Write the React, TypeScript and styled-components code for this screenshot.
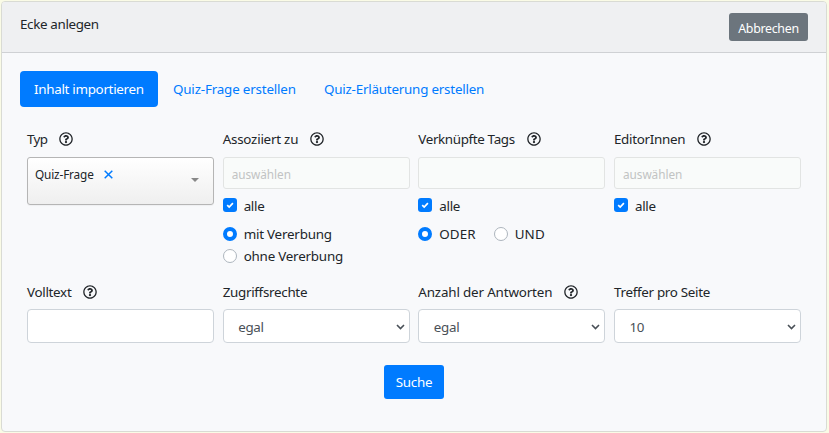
import React from "react";
import styled, { createGlobalStyle } from "styled-components";
import { FaRegQuestionCircle } from "react-icons/fa";

const Global = createGlobalStyle`
  * { box-sizing: border-box; }
  html, body { margin: 0; height: 433px; overflow: hidden; background: #fafbe6; }
  body { font-family: "Noto Sans", "Open Sans", sans-serif; font-size: 13.4px; line-height: 20px; color: #212529; }
`;

const Card = styled.div`
  width: 826px;
  height: 431px;
  margin: 1px 0 0 1px;
  background: #f8f9fb;
  border: 1px solid #d9dbd4;
  border-radius: 4px;
  overflow: hidden;
`;
const Header = styled.header`
  display: flex;
  justify-content: space-between;
  height: 51px;
  padding: 11px 18px 0;
  background: #eff0f2;
  border-bottom: 1px solid #cfd1d4;
`;
const Text = styled.span<{ $spacing?: number }>`
  white-space: nowrap;
  letter-spacing: ${(p) => p.$spacing ?? -0.3}px;
`;
const Title = styled(Text)`
  margin-top: 1px;
`;
const Cancel = styled.button`
  width: 79px;
  height: 28px;
  border: 0;
  border-radius: 3px;
  padding: 3px 0 0;
  background: #6c757d;
  color: #fff;
  font: 12.4px/20px "Noto Sans", sans-serif;
`;
const Tabs = styled.nav`
  display: flex;
  height: 36px;
  gap: 1px;
  margin: 18px 18px 0;
`;
const Tab = styled.button<{ $active?: boolean; $width: number }>`
  width: ${(p) => p.$width}px;
  border: 0;
  border-radius: 4px;
  padding: 0 0 1px 14px;
  text-align: left;
  background: ${(p) => (p.$active ? "#007bff" : "transparent")};
  color: ${(p) => (p.$active ? "#fff" : "#007bff")};
  font: inherit;
`;
const Fields = styled.div<{ $top: number; $height: number }>`
  display: grid;
  grid-template-columns: repeat(4, 187px);
  justify-content: space-between;
  width: 774px;
  height: ${(p) => p.$height}px;
  margin: ${(p) => p.$top}px 0 0 25px;
`;
const Label = styled.div<{ $gap?: number }>`
  display: flex;
  align-items: center;
  gap: 12px;
  height: 20px;
  margin-bottom: ${(p) => p.$gap ?? 8}px;
  svg { flex: none; width: 14px; height: 14px; }
`;
const Picker = styled.div`
  display: flex;
  align-items: center;
  height: 32px;
  padding: 2px 8px 0;
  border: 1px solid #e2e4e3;
  border-radius: 3px;
  background: #f9fbfa;
  color: #c1c3c3;
  font-size: 11.8px;
`;
const TypePicker = styled.div`
  display: flex;
  height: 48px;
  padding: 6px 14px 0 7px;
  border: 1px solid #b5b5b5;
  border-radius: 3px;
  background: linear-gradient(#ffffff, #efefef);
  box-shadow: 0 1px 1px rgba(0, 0, 0, 0.04);
  font-size: 11.8px;
  line-height: 20px;
`;
const Remove = styled.svg`
  width: 9px;
  height: 9px;
  margin: 6px auto 0 10px;
`;
const Arrow = styled.svg`
  width: 8px;
  height: 4px;
  margin-top: 14px;
`;
const Option = styled.div<{ $top?: number }>`
  display: flex;
  align-items: center;
  gap: 7px;
  height: 20px;
  margin-top: ${(p) => p.$top ?? 0}px;
`;
const Check = styled.span`
  display: flex;
  width: 14px;
  height: 14px;
  margin-top: -2px;
  border-radius: 3px;
  background: #007bff;
`;
const Radio = styled.span<{ $on?: boolean }>`
  width: 14px;
  height: 14px;
  border-radius: 50%;
  background: #fff;
  border: ${(p) => (p.$on ? "4.5px solid #007bff" : "1px solid #adb5bd")};
`;
const Choices = styled.div`
  display: flex;
  gap: 18px;
`;
const Input = styled.div`
  display: flex;
  align-items: center;
  justify-content: space-between;
  height: 34px;
  padding: 2px 4px 0 14.5px;
  border: 1px solid #ced4da;
  border-radius: 4px;
  background: #fff;
  color: #495057;
  svg { width: 9px; height: 6px; margin-top: -1px; }
`;
const Submit = styled.button`
  display: block;
  width: 60px;
  height: 34px;
  margin: 22px 0 0 382px;
  padding: 0 0 1px;
  border: 0;
  border-radius: 3px;
  background: #007bff;
  color: #fff;
  font: inherit;
`;

function FieldLabel({ text, help, spacing, gap }: { text: string; help?: boolean; spacing?: number; gap?: number }) {
  return (
    <Label $gap={gap}>
      <Text $spacing={spacing}>{text}</Text>
      {help && <FaRegQuestionCircle />}
    </Label>
  );
}

function All() {
  return (
    <Option $top={7}>
      <Check>
        <svg width="14" height="14" viewBox="0 0 14 14">
          <path d="M4.2 7.2 6.2 9.1 9.9 5.2" fill="none" stroke="#fff" strokeWidth="1.7" />
        </svg>
      </Check>
      <Text>alle</Text>
    </Option>
  );
}

function Select({ value }: { value: string }) {
  return (
    <Input>
      <Text>{value}</Text>
      <svg viewBox="0 0 9 6">
        <path d="M1 1l3.5 3.5L8 1" fill="none" stroke="#495057" strokeWidth="1.6" />
      </svg>
    </Input>
  );
}

export default function App() {
  return (
    <>
      <Global />
      <Card>
        <Header>
          <Title $spacing={-0.35}>Ecke anlegen</Title>
          <Cancel><Text>Abbrechen</Text></Cancel>
        </Header>
        <Tabs>
          <Tab $active $width={138}><Text>Inhalt importieren</Text></Tab>
          <Tab $width={150}><Text $spacing={-0.18}>Quiz-Frage erstellen</Text></Tab>
          <Tab $width={190}><Text $spacing={-0.22}>Quiz-Erläuterung erstellen</Text></Tab>
        </Tabs>
        <Fields $top={22} $height={153}>
          <div>
            <FieldLabel text="Typ" help spacing={-0.6} />
            <TypePicker>
              <Text $spacing={-0.15}>Quiz-Frage</Text>
              <Remove viewBox="0 0 9 9"><path d="M.7.7l7.6 7.6M8.3.7L.7 8.3" stroke="#007bff" strokeWidth="1.5" /></Remove>
              <Arrow viewBox="0 0 8 4"><path d="M0 0h8L4 4z" fill="#888" /></Arrow>
            </TypePicker>
          </div>
          <div>
            <FieldLabel text="Assoziiert zu" help spacing={-0.23} />
            <Picker><Text $spacing={-0.05}>auswählen</Text></Picker>
            <All />
            <Option $top={8}><Radio $on /><Text $spacing={-0.22}>mit Vererbung</Text></Option>
            <Option $top={2}><Radio /><Text $spacing={-0.22}>ohne Vererbung</Text></Option>
          </div>
          <div>
            <FieldLabel text="Verknüpfte Tags" help spacing={-0.36} />
            <Picker />
            <All />
            <Choices>
              <Option $top={8}><Radio $on /><Text $spacing={0.1}>ODER</Text></Option>
              <Option $top={8}><Radio /><Text $spacing={0.1}>UND</Text></Option>
            </Choices>
          </div>
          <div>
            <FieldLabel text="EditorInnen" help />
            <Picker><Text $spacing={-0.05}>auswählen</Text></Picker>
            <All />
          </div>
        </Fields>
        <Fields $top={0} $height={61}>
          <div><FieldLabel text="Volltext" help gap={7} /><Input /></div>
          <div><FieldLabel text="Zugriffsrechte" gap={7} /><Select value="egal" /></div>
          <div><FieldLabel text="Anzahl der Antworten" help spacing={-0.16} gap={7} /><Select value="egal" /></div>
          <div><FieldLabel text="Treffer pro Seite" gap={7} /><Select value="10" /></div>
        </Fields>
        <Submit><Text>Suche</Text></Submit>
      </Card>
    </>
  );
}
